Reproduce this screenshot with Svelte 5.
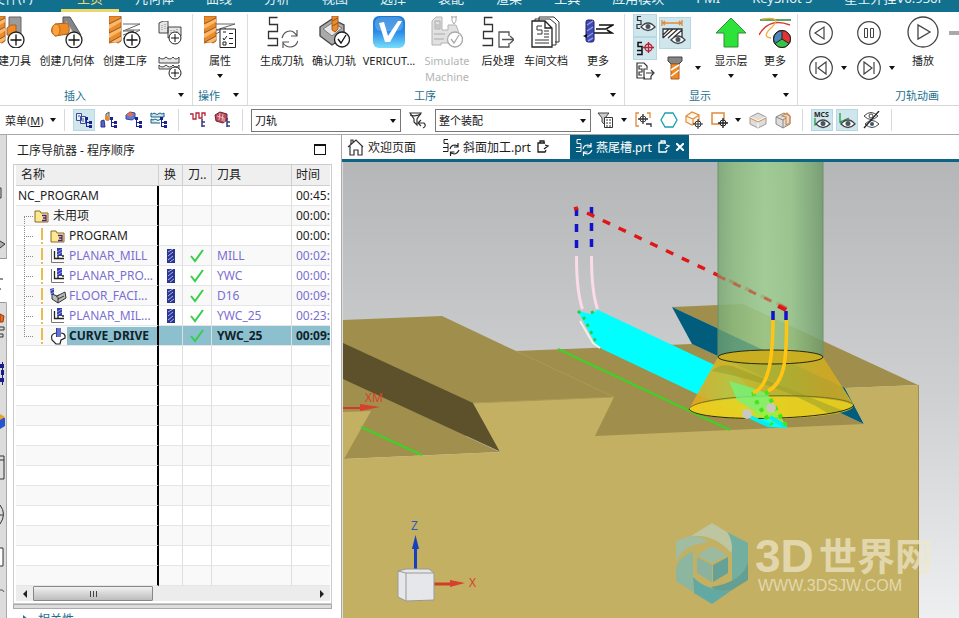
<script lang="ts">
	type Item = { icon: string; label: string; size?: string; caret?: boolean; disabled?: boolean };
	type Row = {
		name: string;
		level: number;
		icon?: string;
		change?: boolean;
		done?: boolean;
		tool?: string;
		time: string;
	};

	const menus = ['主页', '几何体', '曲线', '分析', '视图', '选择', '装配', '渲染', '工具', '应用模块', 'PMI', 'KeyShot 5', '星空外挂V6.936F'];

	const createItems: Item[] = [
		{ icon: 'create-tool', label: '创建刀具', size: 'wide' },
		{ icon: 'create-geometry', label: '创建几何体', size: 'wide' },
		{ icon: 'create-operation', label: '创建工序', size: 'wide' }
	];

	const operationItems: Item[] = [
		{ icon: 'generate', label: '生成刀轨' },
		{ icon: 'verify', label: '确认刀轨' },
		{ icon: 'vericut', label: 'VERICUT...', size: 'wide' },
		{ icon: 'simulate', label: 'Simulate Machine', size: 'wide', disabled: true },
		{ icon: 'post', label: '后处理', size: 'narrow' },
		{ icon: 'shop-doc', label: '车间文档' },
		{ icon: 'more-operation', label: '更多', caret: true }
	];

	const rows: Row[] = [
		{ name: 'NC_PROGRAM', level: 0, time: '00:45:' },
		{ name: '未用项', level: 1, icon: 'folder', time: '00:00:' },
		{ name: 'PROGRAM', level: 2, icon: 'folder', time: '00:00:' },
		{ name: 'PLANAR_MILL', level: 2, icon: 'mill', change: true, done: true, tool: 'MILL', time: '00:02:' },
		{ name: 'PLANAR_PRO...', level: 2, icon: 'mill', change: true, done: true, tool: 'YWC', time: '00:00:' },
		{ name: 'FLOOR_FACI...', level: 2, icon: 'floor', change: true, done: true, tool: 'D16', time: '00:09:' },
		{ name: 'PLANAR_MIL...', level: 2, icon: 'mill', change: true, done: true, tool: 'YWC_25', time: '00:23:' },
		{ name: 'CURVE_DRIVE', level: 2, icon: 'curve', done: true, tool: 'YWC_25', time: '00:09:' }
	];
	const emptyRows = Array.from({ length: 12 });

	let selected = $state('CURVE_DRIVE');
	let filter = $state('刀轨');
	let scope = $state('整个装配');
	let speed = $state(5);
</script>

{#snippet caret()}
	<svg class="caret" width="6" height="4" viewBox="0 0 6 4"><path d="M0 0h6L3 4z" fill="#111" /></svg>
{/snippet}

{#snippet drill()}
	<path d="M0 0h12v25l-3 2-3-1-6 1z" fill="#f08a22" stroke="#a5602a" />
	<path d="M0 8L12 2v4L0 13zM0 17l12-6v4L0 22zM1 26l11-6v4l-5 3z" fill="#fbb76a" />
	<path d="M0 8L12 2M0 17l12-6M1 26l11-6" stroke="#7e5a40" />
{/snippet}

{#snippet plus()}
	<circle cx="23" cy="24" r="8" fill="#fff" stroke="#222" stroke-width="1.3" />
	<path d="M23 18.500v11M17.500 24h11" stroke="#111" stroke-width="1.3" />
{/snippet}

{#snippet passes()}
	<path d="M10.500 0.500h-8v7h8v7h-9v7h9v7h-10" fill="none" stroke="#333" stroke-width="1.3" />
{/snippet}

{#snippet eye()}
	<path d="M0 5Q7-3 14 5Q7 12 0 5z" fill="#fff" stroke="#444" stroke-width="1.300" />
	<circle cx="7" cy="4.500" r="2.500" fill="#456" />
{/snippet}

{#snippet bigIcon(name: string)}
	<svg class="big-icon" width="32" height="32" viewBox="0 0 32 32" fill="none" aria-hidden="true">
		{#if name === 'create-tool'}
			{@render drill()}
			<path d="M16 1h12v20H16z" fill="#9b9b9b" stroke="#666" />
			<path d="M14 12l4-3h5v10h-9z" fill="#f08a22" stroke="#a5602a" />
			{@render plus()}
		{:else if name === 'create-geometry'}
			<path d="M12 1h7l11 18-7 6-11-9z" fill="#858585" stroke="#555" />
			<path d="M15 5l10 16-12-4z" fill="#e4e6e8" />
			<path d="M4 8l12-1q4 5 1 11L4 20q-7-5 0-12z" fill="#f08a22" stroke="#a5602a" />
			<ellipse cx="5" cy="14" rx="4" ry="6" fill="#ffa23c" stroke="#b86b20" />
			{@render plus()}
		{:else if name === 'create-operation'}
			{@render drill()}
			<path d="M14 8h17L14 15h11l-11 4M14 23l17-9H17" stroke="#666" />
			{@render plus()}
		{:else if name === 'properties'}
			{@render drill()}
			<path d="M12 8h19L12 14h14M12 18l10-6" stroke="#666" />
			<path d="M16 13h15.500v18.500H16z" fill="#fff" stroke="#222" />
			<path d="M19 26h3v3h-3zM25 17.500h4M25 22.500h4M25 27.500h4M19 16h3M19 22l1 2 3-4" stroke="#222" />
		{:else if name === 'generate'}
			<g transform="translate(1 1)">{@render passes()}</g>
			<path d="M16 22q2-7 8-7 4 0 7 5M31 14v6h-6M32 25q-2 6-8 6-4 0-7-4M17 32v-6h6" stroke="#555" stroke-width="1.200" />
		{:else if name === 'verify'}
			<path d="M2 11L14 3l12 6v12l-12 8L2 20z" fill="#aaa" stroke="#444" stroke-width="1.300" />
			<path d="M5 13l9-6 10 5-10 8z" fill="#e7e7e7" stroke="#777" />
			<path d="M14 0h6v13l-3 3-3-2z" fill="#f08a22" stroke="#a5602a" />
			<path d="M14 5l6-3M14 10l6-3" stroke="#7e5a40" />
			<circle cx="24" cy="23.500" r="7.500" fill="#fff" stroke="#222" stroke-width="1.300" />
			<path d="M20 23l3 4 5-8" stroke="#111" stroke-width="1.300" />
		{:else if name === 'vericut'}
			<defs>
				<linearGradient id="vericut-fill" x1="0" y1="0" x2="0" y2="1">
					<stop offset="0" stop-color="#1978d6" />
					<stop offset="0.500" stop-color="#2a8de8" />
					<stop offset="1" stop-color="#78ddfa" />
				</linearGradient>
			</defs>
			<rect width="32" height="32" rx="6" fill="url(#vericut-fill)" />
			<rect x="2" y="1" width="28" height="14" rx="6" fill="#fff" opacity="0.200" />
			<path d="M6 7l5-1 4 14L25 5h4L17 26h-5z" fill="#fff" />
		{:else if name === 'simulate'}
			<path d="M1 29V5l4-4h6v13h6V9h8l2 5 2 15h-9v-2H10v2z" fill="#e1e1e1" stroke="#b3b3b3" />
			<path d="M4 5h5v8H4zM3 18h11M3 23h10M20 1h6M21 0v5l2 3 2-3V0M5 9h3M5 11h3" stroke="#aaa" />
			<circle cx="24" cy="23.500" r="7.500" fill="#fff" stroke="#aaa" stroke-width="1.300" />
			<path d="M20 23l3 4 5-8" stroke="#aaa" stroke-width="1.300" />
		{:else if name === 'post'}
			<g transform="translate(0 1)">{@render passes()}</g>
			<path d="M27 20v-4H17v15h10v-4M20 23.500h11M28 20l4 3.500-4 4" stroke="#555" stroke-width="1.300" />
		{:else if name === 'shop-doc'}
			<path d="M9 5V1h15l5 5v20h-4M5 7V3h15l6 5v21h-4" fill="#fff" stroke="#333" />
			<path d="M2 5h13l7 7v19H2zM15 5v7h7" fill="#fff" stroke="#222" stroke-width="1.300" />
			<path d="M12 10H7v4h5v4H7M14 15h5M14 18h5M14 21h5M5 24h14M5 27h14" stroke="#333" />
		{:else if name === 'more-operation'}
			<path d="M17 9h14l-7 4H14M12 17h18l-5-3M12 17h12" stroke="#111" stroke-width="1.500" />
			<rect x="4" y="4" width="8" height="22" rx="2" fill="#3f49ae" stroke="#20206a" />
			<path d="M5 9l6-4M5 15l6-4M5 21l6-4M6 25l5-3" stroke="#8e9bea" stroke-width="1.500" />
			<path d="M1 20l4-2v4z" fill="#111" />
		{:else if name === 'measure'}
			<path d="M4 6h18M3 3v6M23 3v6M6 4L4 6l2 2M20 4l2 2-2 2" stroke="#df8b3a" stroke-width="1.300" />
			<path d="M4 12h19v9H4z" fill="#fff" />
			<path d="M4 21v-9h19v8M4 18l6-6M4 21l10-9M9 21l10-9M15 20l8-7" stroke="#333" stroke-width="1.300" />
			<g transform="translate(12 18)">{@render eye()}</g>
		{:else if name === 'show-layer'}
			<path d="M16 2L31 17h-8v14H9V17H1z" fill="#2de33a" stroke="#318d38" />
		{:else if name === 'more-display'}
			<path d="M1 4h31" stroke="#238d34" stroke-width="1.500" />
			<path d="M0 19Q10 1 31 9" stroke="#df3a3a" stroke-width="1.500" />
			<path d="M3 3q21-3 10 8-11 10-1 11" stroke="#f2ad3e" stroke-width="1.300" />
			<circle cx="23" cy="23" r="8.500" fill="#4d87b8" stroke="#222" />
			<path d="M23 23v-8.500a8.500 8.500 0 0 1 7 13z" fill="#e33434" />
			<path d="M23 23l7 4.500a8.500 8.500 0 0 1-14 0z" fill="#38c444" />
			<circle cx="23" cy="23" r="8.500" stroke="#222" />
			<path d="M23 14.500V23l7 4.500M23 23l-7 4.500" stroke="#222" />
		{:else if name === 'play'}
			<circle cx="16" cy="16" r="15" fill="#fff" stroke="#444" stroke-width="1.300" />
			<path d="M11 9v14l12-7z" stroke="#444" stroke-width="1.300" />
		{/if}
	</svg>
{/snippet}

{#snippet midIcon(name: string)}
	<svg width="24" height="24" viewBox="0 0 24 24" fill="none" aria-hidden="true">
		{#if name === 'copy-block'}
			<path d="M1 2l4-2h5v12H1zM10 6h13v9H12l-2 2z" fill="#e6e6e6" stroke="#444" />
			<path d="M4 4v6M7 3v6M13 9v3M16 9v3M19 8v3" stroke="#888" stroke-dasharray="1 1" />
			<circle cx="17" cy="17" r="6" fill="#fff" stroke="#222" />
			<path d="M17 13v8M13 17h8" stroke="#111" />
		{:else if name === 'wave-block'}
			<path d="M1 1v6h20V1q-3 4-6 0-3 4-7 0-4 4-7 0M1 9v4h20V9q-3 4-6 0-3 4-7 0-4 4-7 0" fill="#e6e6e6" stroke="#444" />
			<circle cx="17" cy="17" r="6" fill="#fff" stroke="#222" />
			<path d="M17 13v8M13 17h8" stroke="#111" />
		{:else if name === 'path-show'}
			<path d="M8 2.500H4.500v4H8v4H4v4h3" stroke="#333" stroke-width="1.200" />
			<g transform="translate(8 8)">{@render eye()}</g>
		{:else if name === 'path-target'}
			<path d="M9 5.500H5v4h4v4H4M9 13.500v4H4" stroke="#111" stroke-width="1.500" />
			<circle cx="15.500" cy="10.500" r="3.500" stroke="#b52335" stroke-width="1.300" />
			<path d="M15.500 5v11M10 10.500h11" stroke="#b52335" stroke-width="1.300" />
		{:else if name === 'path-export'}
			<path d="M12 18H4V3h7l3 3v2M9 6H6v3h3v3H6v3h3M15 9h-4v10h7v-3M13 13h7M18 10l3 3-3 3" stroke="#333" stroke-width="1.200" />
		{:else if name === 'tool'}
			<path d="M5 1h14v4l-3 3H8L5 5z" fill="#858585" stroke="#444" />
			<path d="M8 8h8v15H8z" fill="#f08a22" stroke="#a5602a" />
			<path d="M8 14l8-5M8 20l8-6" stroke="#fff" stroke-width="1.500" />
		{:else}
			<circle cx="12" cy="12" r="11.300" fill="#fff" stroke="#444" stroke-width="1.200" />
			{#if name === 'play-back'}
				<path d="M15 6v12l-9-6z" stroke="#444" stroke-width="1.200" />
			{:else if name === 'pause'}
				<path d="M7.500 7.500h3v9h-3zM13.500 7.500h3v9h-3z" stroke="#444" />
			{:else if name === 'step-back'}
				<path d="M7 6v12M17 6v12l-8-6z" stroke="#444" stroke-width="1.200" />
			{:else if name === 'step-next'}
				<path d="M17 6v12M7 6v12l8-6z" stroke="#444" stroke-width="1.200" />
			{/if}
		{/if}
	</svg>
{/snippet}

{#snippet nodes(color: string)}
	<path d="M11.500 8v8M12 11.500h3M12 15.500h3" stroke={color} />
	<path d="M10 6h3v3h-3zM14 10h3v3h-3zM14 14h3v3h-3z" fill={color} />
{/snippet}

{#snippet smallIcon(name: string)}
	<svg width="18" height="18" viewBox="0 0 18 18" fill="none" aria-hidden="true">
		{#if name === 'view-program'}
			<path d="M1.500 2.500h5v7h-5zM5.500 5.500h5v7h-5z" fill="#e6eff8" stroke="#3a4a9a" />
			<path d="M3 5h2M7 8h2M7 10h2" stroke="#557" />
			{@render nodes('#1a2290')}
		{:else if name === 'view-tool'}
			<path d="M6 3l3-2v8H6z" fill="#c1c5ca" stroke="#555" />
			<path d="M5 5h4v4H5z" fill="#f08a22" />
			<path d="M1 10l3-1 1 7H1z" fill="#5963cf" stroke="#2c3190" />
			{@render nodes('#1a2290')}
		{:else if name === 'view-geometry'}
			<path d="M1 4l4-3 5 1v5L7 9 1 8z" fill="#5680d8" stroke="#334b97" />
			<path d="M1 4l4-3 4 2-3 3z" fill="#ee6a53" />
			{@render nodes('#1a2290')}
		{:else if name === 'view-method'}
			<path d="M1 2v4h13V2q-2 2-4 0-3 3-6 0-1 2-3 0M1 8v4h9M1 8q2 2 4 0 3 3 6 0" fill="#cae5f4" stroke="#186080" />
			{@render nodes('#1a2290')}
		{:else if name === 'sort-path'}
			<path d="M1 3h3v5h3V2h3v5h3V2h3v3" stroke="#b52335" stroke-width="1.300" />
			<path d="M13 8v8M13 11h3M13 15h3" stroke="#39397c" stroke-width="1.500" />
		{:else if name === 'sort-block'}
			<path d="M1 4l5-3 7 2v6l-4 3-7-2z" fill="#b94b5b" stroke="#6c2630" />
			<path d="M3 5l7 2v4M6 2L5 9M9 3L8 10" stroke="#f1bbc0" />
			<path d="M13 7v9M13 11h3M13 15h3" stroke="#39397c" stroke-width="1.500" />
		{:else if name === 'filter-reset'}
			<path d="M1 2h11L8 8v6l-3-3V8z" stroke="#333" stroke-width="1.200" />
			<path d="M1 4q5 2 11-1M10 12h5q3 3-1 5M12 9l-3 3 3 3" stroke="#333" stroke-width="1.200" />
		{:else if name === 'filter-list'}
			<path d="M1 2h11L8 7v7l-3-3V7z" fill="#ccc" stroke="#444" />
			<path d="M7.500 6.500h8v10h-8z" fill="#fff" stroke="#333" />
			<path d="M9 9h2M12 9h2M9 12h2M12 12h2M9 15h2M12 15h2" stroke="#333" />
		{:else if name === 'snap'}
			<path d="M4 2H1v13h3M12 2h3v5" stroke="#df8b3a" stroke-width="1.300" />
			<circle cx="8" cy="8" r="3" stroke="#444" />
			<path d="M8 3v10M3 8h10M11 13h5v3" stroke="#333" stroke-width="1.300" />
		{:else if name === 'hexagon'}
			<path d="M5 2h8l4 7-4 7H5L1 9z" stroke="#1ba0ae" stroke-width="1.300" />
		{:else if name === 'cube-snap'}
			<path d="M1 5l6-4 7 3v6l-7 4-6-3zM1 5l7 3 6-4M8 8v6" fill="#fff3e3" stroke="#df8b3a" stroke-width="1.200" />
			<circle cx="13" cy="13" r="3" fill="#fff" stroke="#333" />
			<path d="M13 8v10M8 13h10" stroke="#333" />
		{:else if name === 'rect-snap'}
			<path d="M1 2h12v11H1z" stroke="#df8b3a" stroke-width="1.500" />
			<circle cx="12" cy="12" r="3" fill="#fff" stroke="#222" />
			<path d="M12 7v10M7 12h10" stroke="#222" stroke-width="1.300" />
		{:else if name === 'box-section'}
			<path d="M1 6l8-4 8 4v7l-8 4-8-4z" fill="#ddd" stroke="#999" />
			<path d="M1 6l8 4v7M9 10l8-4" stroke="#fff" />
			<path d="M1 7l8 4 8-4" stroke="#df8b3a" />
		{:else if name === 'box-open'}
			<path d="M2 6l8-4 6 3v8l-7 4-7-4z" fill="#ddd" stroke="#888" />
			<path d="M2 6l7 3v8M9 9l3-2" stroke="#888" />
			<path d="M8 5l5-3 3 3v7l-4 2V6z" stroke="#df8b3a" stroke-width="1.200" />
		{:else if name === 'mcs'}
			<text x="1" y="6" class="mcs">MCS</text>
			<path d="M2 7v7l6-3" stroke="#299a45" stroke-width="1.300" />
			<g transform="translate(3 8)">{@render eye()}</g>
		{:else if name === 'wcs'}
			<path d="M2 2v9l9-4M2 11l6 5" stroke="#299a45" stroke-width="1.300" />
			<g transform="translate(3 8)">{@render eye()}</g>
		{:else if name === 'hide'}
			<path d="M1 5q7-7 14 0-7 7-14 0zM2 13q7-7 14 0-7 7-14 0z" stroke="#444" />
			<circle cx="8" cy="5" r="2" stroke="#444" />
			<circle cx="9" cy="13" r="2" fill="#456" />
			<path d="M16 0L1 17" stroke="#222" stroke-width="1.300" />
		{:else if name === 'home'}
			<path d="M1 9l8-7 7 7M3 8v9h4v-5h4v5h4V8M4 6V2h2v2" stroke="#333" stroke-width="1.200" />
		{:else if name === 'part'}
			<path d="M6 1.500H2v4h4v4H1M6 9.500v4H1" stroke="currentColor" />
			<path d="M8 11q1-4 5-4l3 1M16 5v4h-4M17 12q-2 4-5 4l-3-1M8.500 18v-4h4" stroke="currentColor" stroke-width="1.200" />
		{:else if name === 'modified'}
			<path d="M11 5H4v9h7l1-2M6 5V3h4v2M11 7l3 1-4 3" stroke="currentColor" stroke-width="1.300" />
		{:else if name === 'folder'}
			<path d="M2 4h5l1 2h7v9H2z" fill="#fbe990" stroke="#8a6b28" />
			<path d="M9 8.500h4v5H9M10 11h3" stroke="#45208a" stroke-width="1.300" />
		{:else if name === 'mill'}
			<path d="M2.500 2v13.500H15" stroke="#777" />
			<path d="M5.500 4v7.500H15M9 9v2M13 9h2" stroke="#222" stroke-width="1.300" />
			<path d="M8 1h5v8H8z" fill="#333ca9" />
			<path d="M8 5l5-3M8 8l5-3" stroke="#8e9bea" />
		{:else if name === 'floor'}
			<path d="M3 7l5 2 8-4 1 6-8 5-6-4z" fill="#bbb" stroke="#333" />
			<path d="M7 10l3-2M9 12l6-3M9 10v6" stroke="#333" />
			<path d="M1 2l4-1v7H2z" fill="#333ca9" />
			<path d="M1 4l4-2M2 7l3-2" stroke="#9aa6f4" />
		{:else if name === 'curve'}
			<path d="M7 6Q1 7 3 13l4 4h4l1-4 4-2q1-5-5-5" fill="#fff" stroke="#222" stroke-width="1.200" />
			<path d="M7 1h5v9H7z" fill="#333ca9" />
			<path d="M9 1v9M11 1v9" stroke="#9aa6f4" />
		{/if}
	</svg>
{/snippet}

{#snippet ribbonButton(item: Item)}
	<button class="ribbon-button {item.size ?? ''}" disabled={item.disabled}>
		{@render bigIcon(item.icon)}
		<span class="label">{item.label}</span>
		{#if item.caret}{@render caret()}{/if}
	</button>
{/snippet}

{#snippet toolButton(icon: string, title: string, active = false)}
	<button class="tool-button" class:active aria-label={title}>{@render smallIcon(icon)}</button>
{/snippet}

<div class="app">
	<nav class="menu-bar">
		<a class="file" href="#file">文件(F)</a>
		{#each menus as menu, i}
			<a href="#menu-{i}" class:current={i === 0}>{menu}</a>
		{/each}
	</nav>

	<div class="ribbon">
		<section class="group first">
			<div class="group-body">
				{#each createItems as item}
					{@render ribbonButton(item)}
				{/each}
				<div class="stack spaced">
					<button aria-label="复制">{@render midIcon('copy-block')}</button>
					<button aria-label="创建方法">{@render midIcon('wave-block')}</button>
				</div>
			</div>
			<footer><span>插入</span>{@render caret()}</footer>
		</section>
		<section class="group">
			<div class="group-body centered">
				{@render ribbonButton({ icon: 'properties', label: '属性', size: 'narrow', caret: true })}
			</div>
			<footer><span>操作</span>{@render caret()}</footer>
		</section>
		<section class="group">
			<div class="group-body padded">
				{#each operationItems as item}
					{@render ribbonButton(item)}
				{/each}
			</div>
			<footer><span>工序</span>{@render caret()}</footer>
		</section>
		<section class="group">
			<div class="group-body padded">
				<div class="stack">
					<button class="active" aria-label="显示刀轨">{@render midIcon('path-show')}</button>
					<button class="active" aria-label="显示刀位">{@render midIcon('path-target')}</button>
					<button aria-label="输出刀轨">{@render midIcon('path-export')}</button>
				</div>
				<div class="stack tools">
					<button class="active" aria-label="显示测量">{@render bigIcon('measure')}</button>
					<button class="with-caret" aria-label="显示刀具">{@render midIcon('tool')}{@render caret()}</button>
				</div>
				{@render ribbonButton({ icon: 'show-layer', label: '显示层', size: 'narrow', caret: true })}
				{@render ribbonButton({ icon: 'more-display', label: '更多', size: 'narrow', caret: true })}
			</div>
			<footer><span>显示</span>{@render caret()}</footer>
		</section>
		<section class="group last">
			<div class="group-body">
				<div class="player">
					<button aria-label="反向播放">{@render midIcon('play-back')}</button>
					<button aria-label="暂停">{@render midIcon('pause')}</button>
					<button aria-label="上一步">{@render midIcon('step-back')}{@render caret()}</button>
					<button aria-label="下一步">{@render midIcon('step-next')}{@render caret()}</button>
				</div>
				{@render ribbonButton({ icon: 'play', label: '播放', size: 'narrow' })}
				<input class="speed" type="range" min="1" max="10" aria-label="动画速度" bind:value={speed} />
			</div>
			<footer><span>刀轨动画</span>{@render caret()}</footer>
		</section>
	</div>

	<div class="toolbar">
		<button class="menu-button">菜单(<u>M</u>) {@render caret()}</button>
		<i class="divider"></i>
		{@render toolButton('view-program', '程序顺序视图', true)}
		{@render toolButton('view-tool', '机床视图')}
		{@render toolButton('view-geometry', '几何视图')}
		{@render toolButton('view-method', '加工方法视图')}
		<i class="divider"></i>
		{@render toolButton('sort-path', '刀轨列表')}
		{@render toolButton('sort-block', '工件列表')}
		<i class="divider"></i>
		<label class="combo">
			<select aria-label="类型过滤器" bind:value={filter}>
				<option>刀轨</option>
			</select>
			{@render caret()}
		</label>
		<button class="tool-button filter" aria-label="重置过滤器">{@render smallIcon('filter-reset')}</button>
		<label class="combo scope">
			<select aria-label="选择范围" bind:value={scope}>
				<option>整个装配</option>
			</select>
			{@render caret()}
		</label>
		<button class="tool-button drop" aria-label="常规选择过滤器">{@render smallIcon('filter-list')}{@render caret()}</button>
		{@render toolButton('snap', '捕捉')}
		{@render toolButton('hexagon', '多边形')}
		{@render toolButton('cube-snap', '捕捉体')}
		<button class="tool-button drop" aria-label="矩形选择">{@render smallIcon('rect-snap')}{@render caret()}</button>
		{@render toolButton('box-section', '剖切')}
		{@render toolButton('box-open', '编辑截面')}
		<i class="divider"></i>
		{@render toolButton('mcs', '显示 MCS', true)}
		{@render toolButton('wcs', '显示 WCS', true)}
		{@render toolButton('hide', '隐藏')}
		<i class="divider"></i>
	</div>

	<main>
		<nav class="resource-bar">
			<button class="tall" aria-label="装配导航器">
				<svg width="6" height="124" viewBox="0 0 6 124" fill="none">
					<path d="M0 53h1v10H0" stroke="#333" />
					<path d="M0 106l5 3-5 4" fill="#aaa" stroke="#333" />
				</svg>
			</button>
			<button class="open" aria-label="工序导航器">
				<svg width="6" height="44" viewBox="0 0 6 44"><path d="M0 20h3M0 30h1" stroke="#222" /></svg>
			</button>
			<button aria-label="加工特征">
				<svg width="6" height="40" viewBox="0 0 6 40" fill="none">
					<path d="M0 8l4 2-1 6H0z" fill="#ef6a20" stroke="#943e10" />
					<path d="M0 21h4v3H0M0 28h3v3H0" stroke="#333" />
				</svg>
			</button>
			<button aria-label="机床导航器">
				<svg width="6" height="40" viewBox="0 0 6 40"><path d="M0 12h4v4H0zM1 18h3v5H1zM0 26h4v4H0zM2 10h1v23H2z" fill="#171b8c" /></svg>
			</button>
			<button aria-label="重用库">
				<svg width="6" height="40" viewBox="0 0 6 40">
					<path d="M0 18l5 2v8l-5 3z" fill="#2853cb" />
					<path d="M0 16l5 3-5 3z" fill="#e8a12c" />
				</svg>
			</button>
			<button aria-label="浏览器">
				<svg width="6" height="40" viewBox="0 0 6 40" fill="none"><path d="M0 12h4v23H0M0 16h4" stroke="#333" /></svg>
			</button>
			<button aria-label="历史记录">
				<svg width="6" height="40" viewBox="0 0 6 40" fill="none"><path d="M0 15q7 9 0 19M0 25h3" stroke="#333" /></svg>
			</button>
			<button aria-label="角色">
				<svg width="6" height="40" viewBox="0 0 6 40"><path d="M-1 12h4v18h-4z" fill="#fff" stroke="#333" /></svg>
			</button>
			<button aria-label="系统场景">
				<svg width="6" height="30" viewBox="0 0 6 30" fill="none"><path d="M0 3q3-1 4 2" stroke="#555" /></svg>
			</button>
		</nav>

		<aside class="navigator">
			<header>
				<h2>工序导航器 - 程序顺序</h2>
				<button class="maximize" aria-label="最大化"></button>
			</header>
			<div class="tree">
				<table>
					<colgroup>
						<col />
						<col class="col-change" />
						<col class="col-path" />
						<col class="col-tool" />
						<col class="col-time" />
					</colgroup>
					<thead>
						<tr><th>名称</th><th>换</th><th>刀..</th><th>刀具</th><th>时间</th></tr>
					</thead>
					<tbody>
						{#each rows as row, i}
							<tr class:operation={row.done} class:selected={row.name === selected} onclick={() => (selected = row.name)}>
								<td class="name">
									<div>
										{#if row.level === 1}
											<svg width="17" height="20" viewBox="0 0 17 20"><path d="M8.500 20V10M8 10.500h9" class="guide" /></svg>
										{:else if row.level === 2}
											<svg width="33" height="20" viewBox="0 0 33 20">
												<path d="M8.500 0v{i === rows.length - 1 ? 10 : 20}M8 10.500h9" class="guide" />
												<path d="M26 2v12M26 16v2" stroke="#e8bd4e" stroke-width="2" />
											</svg>
										{/if}
										{#if row.icon}{@render smallIcon(row.icon)}{/if}
										<span>{row.name}</span>
									</div>
								</td>
								<td class="mark">
									{#if row.change}
										<svg width="8" height="14" viewBox="0 0 8 14">
											<path d="M0 0h8v14H0z" fill="#2b3590" />
											<path d="M1 3l5-3M1 7l5-4M1 11l5-4M3 13l4-3" stroke="#a9b5f4" />
										</svg>
									{/if}
								</td>
								<td class="mark">
									{#if row.done}
										<svg width="16" height="14" viewBox="0 0 16 14" fill="none"><path d="M2 7l4 5 8-11" stroke="#35cf4a" stroke-width="2" /></svg>
									{/if}
								</td>
								<td>{row.tool ?? ''}</td>
								<td>{row.time}</td>
							</tr>
						{/each}
						{#each emptyRows as _}
							<tr><td class="name"></td><td></td><td></td><td></td><td></td></tr>
						{/each}
					</tbody>
				</table>
				<div class="scrollbar">
					<button aria-label="向左滚动"><svg width="4" height="8" viewBox="0 0 4 8"><path d="M4 0v8L0 4z" fill="#222" /></svg></button>
					<div class="track"><div class="thumb"><i></i></div></div>
					<button aria-label="向右滚动"><svg width="4" height="8" viewBox="0 0 4 8"><path d="M0 0v8l4-4z" fill="#222" /></svg></button>
				</div>
			</div>
			<div class="splitter"></div>
			<button class="section-toggle">
				<svg width="6" height="10" viewBox="0 0 6 10"><path d="M0 0l6 5-6 5z" fill="#1c6f93" /></svg>
				相关性
			</button>
		</aside>

		<section class="graphics">
			<nav class="tabs">
				<a href="#welcome">{@render smallIcon('home')}欢迎页面</a>
				<a href="#bevel" class="second">{@render smallIcon('part')}斜面加工.prt{@render smallIcon('modified')}</a>
				<a href="#dovetail" class="current">
					{@render smallIcon('part')}燕尾槽.prt{@render smallIcon('modified')}
					<svg width="8" height="8" viewBox="0 0 8 8"><path d="M0 0l8 8M8 0L0 8" stroke="#fff" stroke-width="2" /></svg>
				</a>
			</nav>
			<div class="viewport">
				<svg viewBox="343 162 616 456" preserveAspectRatio="xMinYMin slice" fill="none" role="img" aria-label="燕尾槽">
					<defs>
						<linearGradient id="shank" x1="0" x2="1" y1="0" y2="0">
							<stop offset="0" stop-color="#7aa873" />
							<stop offset="0.150" stop-color="#8bbb80" />
							<stop offset="0.450" stop-color="#9dce8f" />
							<stop offset="0.700" stop-color="#94c487" />
							<stop offset="1" stop-color="#6f9a6a" />
						</linearGradient>
						<linearGradient id="cutter" x1="0" x2="1" y1="0" y2="0">
							<stop offset="0" stop-color="#e8a51c" />
							<stop offset="0.250" stop-color="#cdbb2c" />
							<stop offset="0.550" stop-color="#bdb82c" />
							<stop offset="0.850" stop-color="#d2a921" />
							<stop offset="1" stop-color="#cdb02a" />
						</linearGradient>
					</defs>

					<!-- workpiece -->
					<path d="M343 320l99-4 74 35 176-7 172 80v12H343z" fill="#9f8e4c" />
					<path d="M672 307l71-3 175 81-73 3z" fill="#9f8e4c" />
					<path d="M672 307l173 81 19 36-172-80z" fill="#025c7b" />
					<path d="M343 379l157 73-157 7z" fill="#a08f4d" />
					<path d="M343 343l130 60 28 49-158-73z" fill="#5c512b" />
					<path d="M343 412l28-1-27 48 156-7-27-49 141-6-19 39 269-12-19-36 73-3v233H343z" fill="#c4b062" />
					<path d="M516 351l98 46-141 6" stroke="#ac9a56" />
					<path d="M918.500 385v233" stroke="#a08e4c" />
					<path d="M558 349l172 81M361 427l61 28" stroke="#3ed228" stroke-width="2" />

					<!-- tool path -->
					<path d="M578 311L590 314L598 310L738 376L787 428L770 427L697 394L602 349L596 345z" fill="#00ffff" />
					<path d="M580 321l13 22 7 5" stroke="#f2f0e6" stroke-width="2" />
					<path d="M578 311l5 5 14 28M591 313l6-3" stroke="#1ed052" stroke-width="3" stroke-dasharray="3 5" />
					<path d="M576.500 256q0 36 6 53M591.500 256q0 36 6 53" stroke="#fbdbe7" stroke-width="3" />
					<path d="M576.500 208v42M591.500 207v43" stroke="#1212cc" stroke-width="3.500" stroke-dasharray="8 8" />
					<path d="M574 209l4-1M587 213l200 95" stroke="#e01616" stroke-width="3.500" stroke-dasharray="8 9.500" />

					<!-- tool -->
					<path d="M718 162h105v195q-52 14-105 0z" fill="url(#shank)" opacity="0.850" />
					<path d="M718 160v197M823 160v197" stroke="#6c9268" />
					<path d="M718 276l70 33" stroke="#c05840" stroke-width="3" stroke-dasharray="8 9" opacity="0.800" />
					<path d="M718 329l60 28H718z" fill="#407f6c" opacity="0.400" />
					<path d="M718 357q53 12 105 0l31 48c-8 16-155 18-165 4z" fill="url(#cutter)" opacity="0.900" />
					<ellipse cx="771" cy="408" rx="82" ry="11" fill="#f0d71e" opacity="0.750" transform="rotate(-1 771 408)" />
					<ellipse cx="770.500" cy="357" rx="52.500" ry="7" fill="#c9ae21" stroke="#262811" />
					<path d="M712 371q8-8 20-5l112 45-13 4q-50-31-119-44" fill="#8f9b2d" opacity="0.500" />
					<path d="M689 409c7-16 154-18 165-4" stroke="#77751d" />
					<path d="M689 409c8 15 157 11 165-4" stroke="#272a10" />
					<path d="M729 381l24 7 15 6 9 22-18-2-22-14z" fill="#73f47b" opacity="0.800" />
					<path d="M752 414l35 13-14-23z" fill="#9cef40" opacity="0.800" />
					<path d="M748 416l22 10M770 417l16 10" stroke="#00eff0" stroke-width="4" />
					<path d="M753 392l5 13 14 20M766 391l7 13 14 23" stroke="#41e518" stroke-width="4" stroke-dasharray="4 5" />
					<path d="M773 318C773 362 768 387 753 393M786.500 318C787 362 784 383 768 391" stroke="#ffc512" stroke-width="3.500" />
					<path d="M773 311v9M786 311v9" stroke="#1212cc" stroke-width="3.500" />
					<path d="M778 306l8 4" stroke="#e01616" stroke-width="4" />
					<circle cx="747" cy="414" r="5" fill="#c9c9bd" />
					<circle cx="771" cy="408" r="5" fill="#c9c9bd" />

					<!-- axes -->
					<path d="M343 408h20" stroke="#cf3c28" stroke-width="2" />
					<path d="M360 404l20 3-20 4z" fill="#d83f2d" />
					<text x="365" y="402" class="axis red">XM</text>
					<text x="411" y="530" class="axis blue">Z</text>
					<text x="469" y="587" class="axis red">X</text>
					<path d="M415.500 571v-25" stroke="#173fc0" stroke-width="3" />
					<path d="M412 549l3.500-14 3.500 14z" fill="#173fc0" />
					<path d="M434 584h19" stroke="#cf3c28" stroke-width="3" />
					<path d="M450 580l15 3-15 4z" fill="#d83f2d" />
					<path d="M398 571l8-2h23l5 4v27l-28 1-8-4z" fill="#e6e7ea" stroke="#999" />
					<path d="M398 571l8 2h28M406 573v28" stroke="#999" />

					<!-- brand -->
					<g opacity="0.850">
						<path d="M691 536l21-13 18 11q5 4 1 19-16-19-40-17z" fill="#bccbad" />
						<path d="M727 532l21 11v18q-1 12-16 21V553q1-13-5-21z" fill="#65afac" />
						<path d="M748 562v18l-16 10q-15 3-21-3 32-5 37-25z" fill="#559b9b" />
						<path d="M693 577q8 8 18 11 10 5 21 2l-20 14-18-11z" fill="#52a8b0" />
						<path d="M693 551v41l-17-11v-13q2-10 17-17z" fill="#83b8aa" />
						<path d="M676 562v-21l14-5q14 0 18 6-26 3-32 20z" fill="#9abfad" />
						<path d="M697 555l15-9 16 9-16 8z" fill="#97bcaa" />
						<path d="M697 557l15 8v17l-15-9z" fill="#80b3aa" />
						<path d="M728 557l-15 8v17l15-9z" fill="#559fa0" />
					</g>
					<g class="brand">
						<text x="755" y="572" class="brand-3d">3D</text>
						<text x="819" y="570" class="brand-name">世界网</text>
						<text x="758" y="591" class="brand-url">WWW.3DSJW.COM</text>
					</g>
				</svg>
			</div>
		</section>
	</main>
</div>

<style>
	:global(body) {
		margin: 0;
		background: #fff;
	}

	.app {
		display: flex;
		flex-direction: column;
		height: 100vh;
		overflow: hidden;
		font-family: 'Noto Sans', 'Noto Sans CJK SC', sans-serif;
		font-size: 11px;
		color: #1d1d1d;
	}

	button {
		font: inherit;
		color: inherit;
		background: none;
		border: 0;
		padding: 0;
	}

	svg {
		display: block;
		flex-shrink: 0;
	}

	.menu-bar {
		display: flex;
		align-items: flex-end;
		flex-shrink: 0;
		height: 12px;
		overflow: hidden;
		background: #12708f;

		a {
			flex-shrink: 0;
			box-sizing: border-box;
			height: 24px;
			padding: 0 16px;
			border-bottom: 3px solid transparent;
			color: #e8f3f6;
			font-size: 13px;
			line-height: 20px;
			text-decoration: none;
			white-space: nowrap;
		}

		.file {
			width: 61px;
			padding: 0;
			text-indent: -8px;
		}

		.current {
			color: #ecd868;
			border-color: #ecd868;
		}
	}

	.ribbon {
		display: flex;
		flex-shrink: 0;
		padding-top: 2px;
		background: #fff;
		border-bottom: 1px solid #d5d5d5;
	}

	.group {
		flex-shrink: 0;
		border-right: 1px solid #dcdcdc;

		footer {
			display: flex;
			align-items: center;
			height: 16px;
			padding: 0 8px 2px 0;
			color: #1c6f8f;
		}

		footer span {
			flex: 1;
			padding-right: 8px;
			text-align: center;
		}
	}

	.first {
		margin-left: -20px;
	}

	.last {
		flex: 0 0 260px;
		border: 0;
	}

	.group-body {
		display: flex;
		height: 73px;
	}

	.centered {
		padding: 0 5px;
	}

	.padded {
		padding-left: 8px;
	}

	.ribbon-button {
		display: flex;
		flex-direction: column;
		align-items: center;
		width: 52px;
		padding-top: 2px;

		&.wide {
			width: 58px;
		}

		&.narrow {
			width: 44px;
		}

		&:disabled {
			color: #b4b4b4;
		}

		.label {
			margin-top: 5px;
			line-height: 16px;
		}

		.caret {
			margin-top: 5px;
		}
	}

	.stack {
		display: flex;
		flex-direction: column;
		width: 24px;

		button {
			height: 23px;
			overflow: hidden;
		}
	}

	.spaced {
		gap: 11px;
		width: 34px;
		padding: 7px 0 0 4px;

		button {
			height: 24px;
		}
	}

	.tools {
		align-items: flex-start;
		gap: 7px;
		width: 50px;
		padding: 3px 0 0 2px;

		button {
			height: 32px;
		}

		.with-caret {
			display: flex;
			align-items: center;
			gap: 8px;
			height: 24px;
			padding-left: 4px;
		}
	}

	.active {
		background: #cfe6ec;
		box-shadow: inset 0 0 0 1px #b5d8e2;
	}

	.player {
		display: grid;
		grid-template-columns: 48px 44px;
		grid-template-rows: 24px 24px;
		row-gap: 11px;
		padding: 7px 0 0 11px;

		button {
			display: flex;
			align-items: center;
			gap: 8px;
		}
	}

	.speed {
		appearance: none;
		width: 100px;
		height: 4px;
		margin: 17px 0 0 4px;
		background: #a9a9a9;

		&::-webkit-slider-thumb {
			appearance: none;
			width: 8px;
			height: 16px;
			background: #777;
		}
	}

	.toolbar {
		display: flex;
		align-items: center;
		gap: 3px;
		flex-shrink: 0;
		height: 28px;
		padding-left: 5px;
		background: #fff;
		border-bottom: 1px solid #a8a8a8;
	}

	.menu-button {
		display: flex;
		flex-shrink: 0;
		align-items: center;
		width: 51px;
		white-space: nowrap;

		.caret {
			margin-left: auto;
		}
	}

	.divider {
		flex-shrink: 0;
		width: 1px;
		height: 22px;
		margin: 0 5px;
		background: #d8d8d8;
	}

	.tool-button {
		display: flex;
		flex-shrink: 0;
		align-items: center;
		justify-content: center;
		width: 22px;
		height: 22px;
	}

	.filter {
		width: 28px;
	}

	.drop {
		gap: 6px;
		width: 36px;
	}

	.combo {
		position: relative;
		flex: 0 0 150px;

		select {
			appearance: none;
			box-sizing: border-box;
			width: 100%;
			height: 23px;
			padding: 0 3px;
			border: 1px solid #777;
			border-radius: 0;
			background: #fff;
			color: #111;
			font: inherit;
		}

		.caret {
			position: absolute;
			top: 10px;
			right: 5px;
			pointer-events: none;
		}
	}

	.scope {
		flex-basis: 156px;
	}

	.mcs {
		font-size: 7px;
		font-weight: 700;
		fill: #222;
	}

	main {
		display: grid;
		flex: 1;
		grid-template-columns: 7px 335px 1fr;
		min-height: 0;
	}

	.resource-bar {
		display: flex;
		flex-direction: column;
		overflow: hidden;
		background: #dcdcdc;

		button {
			flex: 0 0 46px;
			border-right: 1px solid #aaa;
			overflow: hidden;
		}

		.tall {
			flex-basis: 124px;
			border-bottom: 1px solid #999;
		}

		.open {
			flex-basis: 44px;
			background: #fff;
			border-right-color: #fff;
			border-bottom: 1px solid #999;
		}
	}

	.navigator {
		display: flex;
		flex-direction: column;
		min-height: 0;
		overflow: hidden;
		padding: 0 9px 0 6px;
		background: #fff;
		border-right: 1px solid #aaa;
		font-size: 12px;

		header {
			display: flex;
			align-items: center;
			justify-content: space-between;
			flex-shrink: 0;
			height: 29px;
			padding: 0 6px 0 4px;
		}

		h2 {
			margin: 0;
			font-size: 12px;
			font-weight: 400;
		}
	}

	.maximize {
		width: 12px;
		height: 11px;
		border: 1px solid #111;
		border-top-width: 2px;
	}

	.tree {
		flex-shrink: 0;
		padding: 0 1px 2px 2px;
		border: 1px solid #ccc;
	}

	table {
		width: 100%;
		table-layout: fixed;
		border-collapse: separate;
		border-spacing: 0;
	}

	.col-change {
		width: 24px;
	}

	.col-path {
		width: 29px;
	}

	.col-tool {
		width: 80px;
	}

	.col-time {
		width: 38px;
	}

	th,
	td {
		box-sizing: border-box;
		height: 20px;
		padding: 0 0 0 5px;
		border-right: 1px solid #dedede;
		border-bottom: 1px solid #e6e6e6;
		line-height: 18px;
		text-align: left;
		font-weight: 400;
		white-space: nowrap;
		overflow: hidden;
	}

	th {
		height: 21px;
		background: #efefef;
		border-color: #cfcfcf;
	}

	th:last-child,
	td:last-child {
		padding-left: 4px;
		border-right: 0;
	}

	tbody tr:nth-child(even) {
		background: #f9f9f9;
	}

	.name {
		padding: 0;
		border-right: 2px solid #000;

		div {
			display: flex;
			align-items: center;
			height: 19px;
		}

		span {
			flex: 1;
			padding-left: 2px;
		}
	}

	.mark {
		padding: 0;

		svg {
			margin: 0 auto;
		}
	}

	.guide {
		fill: none;
		stroke: #888;
		stroke-dasharray: 1 1;
	}

	.operation {
		color: #7b6fd0;
	}

	.selected {
		color: #10222a;
		font-weight: 700;

		td {
			font-weight: 700;
		}

		td:not(.name),
		.name span {
			background: #8cc0cf;
		}
	}

	.scrollbar {
		display: flex;
		height: 15px;
		background: #ececec;

		button {
			display: flex;
			align-items: center;
			justify-content: center;
			width: 17px;
		}
	}

	.track {
		flex: 1;
	}

	.thumb {
		display: flex;
		align-items: center;
		justify-content: center;
		box-sizing: border-box;
		width: 43%;
		height: 15px;
		border: 1px solid #888;
		border-radius: 1px;
		background: linear-gradient(#f2f2f2, #d6d6d6 50%, #bdbdbd);

		i {
			width: 5px;
			height: 6px;
			border: solid #444;
			border-width: 0 1px;
			background: linear-gradient(90deg, transparent 2px, #444 2px, #444 3px, transparent 3px);
		}
	}

	.splitter {
		flex-shrink: 0;
		height: 3px;
		border: 1px solid #aaa;
		background: #ddd;
	}

	.section-toggle {
		display: flex;
		flex-shrink: 0;
		align-items: center;
		gap: 9px;
		padding: 2px 10px;
		color: #1c6f93;
		line-height: 18px;
	}

	.graphics {
		display: flex;
		flex-direction: column;
		min-width: 0;
		min-height: 0;
	}

	.tabs {
		display: flex;
		flex-shrink: 0;
		height: 24px;
		background: #fff;
		border-bottom: 3px solid #0d6484;
		font-size: 12px;

		a {
			display: flex;
			align-items: center;
			gap: 3px;
			padding: 0 5px;
			color: #1d1d1d;
			text-decoration: none;
			white-space: nowrap;
		}

		.second {
			margin-left: 16px;
		}

		.current {
			margin-left: 13px;
			background: #045d80;
			color: #fff;
		}
	}

	.viewport {
		flex: 1;
		min-height: 0;
		overflow: hidden;
		border-left: 1px solid #ddd;
		background: linear-gradient(#b5b6b7, #cecfd1 50%, #eeeff1);

		svg {
			width: 100%;
			height: 100%;
		}
	}

	.axis {
		font-size: 12px;
	}

	.red {
		fill: #d83f2d;
	}

	.blue {
		fill: #2858c0;
	}

	.brand {
		fill: #efe8cc;
		opacity: 0.7;
		font-weight: 700;
	}

	.brand-3d {
		font-family: 'Liberation Sans', sans-serif;
		font-size: 46px;
	}

	.brand-name {
		font-family: 'Noto Sans CJK SC', sans-serif;
		font-size: 38px;
	}

	.brand-url {
		font-family: 'Liberation Sans', sans-serif;
		font-size: 16px;
		font-weight: 400;
	}
</style>
